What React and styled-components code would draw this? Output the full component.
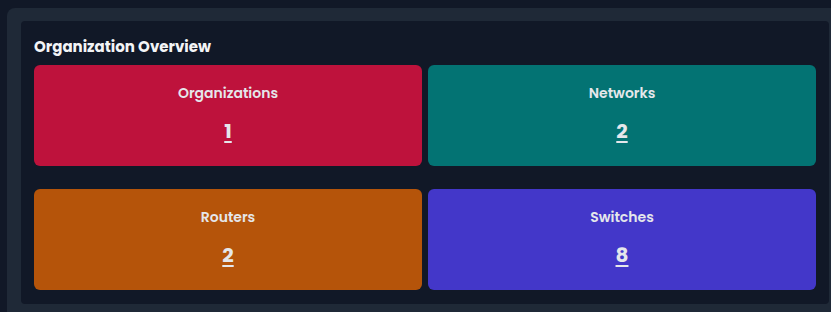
import React from "react";
import styled, { createGlobalStyle } from "styled-components";

const Global = createGlobalStyle`
  html, body { margin: 0; padding: 0; background: #111827; overflow: hidden; }
  body { font-family: "Poppins", "Open Sans", "Noto Sans", sans-serif; }
`;

const Page = styled.div`
  padding: 8px 0 0 7px;
  height: 312px;
  box-sizing: border-box;
`;

const Outer = styled.section`
  background: #1f2937;
  border-radius: 8px 0 0 8px;
  padding: 13px 0 20px 14px;
  width: 840px;
  box-sizing: border-box;
`;

const Inner = styled.div`
  background: #111827;
  border-radius: 4px;
  width: 808px;
  box-sizing: border-box;
  padding: 13px 13px 14px 13px;
`;

const Title = styled.h2`
  margin: 1px 0 6px 0;
  font-size: 15px;
  line-height: 24px;
  font-weight: 700;
  color: #f3f4f6;
`;

const Grid = styled.div`
  display: grid;
  grid-template-columns: 1fr 1fr;
  column-gap: 6px;
  row-gap: 23.5px;
`;

const Card = styled.div`
  background: ${(p) => p.$bg};
  border-radius: 6px;
  height: 100.5px;
  display: flex;
  flex-direction: column;
  align-items: center;
  padding-top: 17px;
  box-sizing: border-box;
`;

const Label = styled.div`
  font-size: 14px;
  line-height: 22px;
  font-weight: 600;
  color: #e5e7eb;
`;

const Count = styled.a`
  margin-top: 13px;
  font-size: 20px;
  line-height: 28px;
  font-weight: 700;
  color: #e5e7eb;
  text-decoration: underline;
  text-decoration-thickness: 2px;
  text-underline-offset: 3px;
  cursor: pointer;
`;

const items = [
  { label: "Organizations", count: 1, bg: "#be123c" },
  { label: "Networks", count: 2, bg: "#037373" },
  { label: "Routers", count: 2, bg: "#b5540a" },
  { label: "Switches", count: 8, bg: "#4337c9" },
];

export default function App() {
  return (
    <>
      <Global />
      <Page>
        <Outer>
          <Inner>
            <Title>Organization Overview</Title>
            <Grid>
              {items.map((it) => (
                <Card key={it.label} $bg={it.bg}>
                  <Label>{it.label}</Label>
                  <Count>{it.count}</Count>
                </Card>
              ))}
            </Grid>
          </Inner>
        </Outer>
      </Page>
    </>
  );
}
